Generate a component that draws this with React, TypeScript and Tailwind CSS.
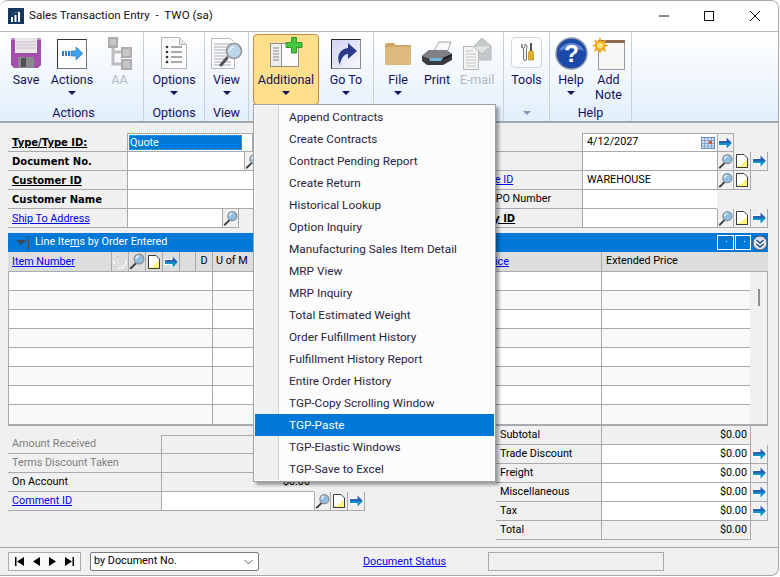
import type { ReactNode } from 'react';

const line = 'border-[#a9a9b0]';

function Lens() {
  return (
    <svg width="16" height="17" viewBox="0 0 16 17">
      <path d="M6.5 10.5L2 15" stroke="#3a3a3a" strokeWidth="2.2" strokeLinecap="round" />
      <path d="M5.5 10L1.5 14" stroke="#d8d8d8" strokeWidth="0.7" />
      <circle cx="10" cy="6" r="4.8" fill="#8fbfe0" stroke="#8a8f96" strokeWidth="1.4" />
      <path d="M7 6a3 3 0 0 1 3-3" stroke="#eaf5fc" strokeWidth="1.4" fill="none" />
    </svg>
  );
}

function Note() {
  return (
    <svg width="14" height="16" viewBox="0 0 14 16">
      <path d="M1.5 1.5h7.5l3.5 3.5v9.5h-11z" fill="#fff" stroke="#3c3c3c" />
      <path d="M2 14v-1h3l3-3 2-2 2-1v7z" fill="#fdf27a" />
      <path d="M1.5 14.5h11V5" stroke="#3c3c3c" fill="none" />
    </svg>
  );
}

function Arrow() {
  return (
    <svg width="15" height="14" viewBox="0 0 15 14">
      <path d="M0 4h7V.5L15 7l-8 6.500V10H0z" fill="#fff" opacity="0.85" />
      <path d="M1 5h7.500V1.500L14 7H1z" fill="#2a5fb8" />
      <path d="M1 7h13l-5.500 5.500V9H1z" fill="#1190c4" />
    </svg>
  );
}

function IconCell({ children, className = '' }: { children?: ReactNode; className?: string }) {
  return (
    <div className={`w-[17px] h-[19px] border-r border-b ${line} flex items-center justify-center shrink-0 ${className}`}>
      {children}
    </div>
  );
}

function Caret({ color = '#14105c', w = 8, h = 4 }: { color?: string; w?: number; h?: number }) {
  return (
    <svg width={w} height={h} viewBox="0 0 8 4" className="block">
      <path d="M0 0h8L4 4z" fill={color} />
    </svg>
  );
}

function SaveIcon() {
  return (
    <svg width="32" height="33" viewBox="0 0 32 33">
      <path d="M1 1h30v27l-3 3H4l-3-3z" fill="#a44fae" />
      <path d="M1 1h30v2H1z" fill="#c98fd0" />
      <rect x="5" y="1" width="22" height="15" fill="#e9e6ea" />
      <path d="M6 5h20M6 8h20M6 11h20" stroke="#c9c4cc" />
      <rect x="8" y="20" width="16" height="11" fill="#8a8a8e" />
      <rect x="11" y="21" width="5" height="9" fill="#4f4f55" />
    </svg>
  );
}

function ActionsIcon() {
  return (
    <svg width="32" height="33" viewBox="0 0 32 33">
      <rect x="1.5" y="2.5" width="29" height="29" fill="#fdfdfd" stroke="#777" />
      <path d="M1.5 31.5v-29h29" fill="none" stroke="#333" />
      <path d="M6 14h2v5H6zM9 14h2v5H9zM12 14h2v5h-2z" fill="#2c7fd0" />
      <path d="M15 14h5v-4l7 6.500-7 6.500v-4h-5z" fill="#3fa3e8" stroke="#2276c8" strokeWidth="0.6" />
    </svg>
  );
}

function TreeIcon() {
  return (
    <svg width="26" height="33" viewBox="0 0 26 33">
      <path d="M6 10v17h10M6 15h10" stroke="#bdbdbd" strokeWidth="3" fill="none" />
      <rect x="1" y="0" width="10" height="11" fill="#adadad" />
      <rect x="14" y="10" width="11" height="11" fill="#adadad" />
      <rect x="14" y="22" width="11" height="11" fill="#adadad" />
      <rect x="3" y="2" width="6" height="6" fill="#c6c6c6" />
      <rect x="16" y="12" width="7" height="7" fill="#c6c6c6" />
      <rect x="16" y="24" width="7" height="7" fill="#c6c6c6" />
    </svg>
  );
}

function OptionsIcon() {
  return (
    <svg width="26" height="33" viewBox="0 0 26 33">
      <path d="M.5.5h18l7 7v24H.5z" fill="#fcfcfc" stroke="#b5b5b5" />
      <path d="M18.500.5v7h7" fill="#e2e2e2" stroke="#b5b5b5" />
      <circle cx="6" cy="10" r="1.300" fill="#333" />
      <circle cx="6" cy="15" r="1.300" fill="#333" />
      <circle cx="6" cy="20" r="1.300" fill="#333" />
      <circle cx="6" cy="25" r="1.300" fill="#333" />
      <path d="M10 10h11M10 15h11M10 20h11M10 25h11" stroke="#555" />
    </svg>
  );
}

function ViewIcon() {
  return (
    <svg width="32" height="33" viewBox="0 0 32 33">
      <path d="M.5 1.500h19l4 4v26H.5z" fill="#fdfdfd" stroke="#bcbcbc" />
      <path d="M3 7h17M3 10h14M3 13h12M3 16h12M3 19h14M3 22h12M3 25h17M3 28h17" stroke="#a5abb6" />
      <path d="M16 21l-6 7" stroke="#555" strokeWidth="3" strokeLinecap="round" />
      <circle cx="23" cy="14" r="7.500" fill="#b9d5ea" stroke="#8e9399" strokeWidth="1.600" />
      <path d="M19 14a4 4 0 0 1 4-4" stroke="#f0f8fd" strokeWidth="1.600" fill="none" />
    </svg>
  );
}

function AdditionalIcon() {
  return (
    <svg width="34" height="33" viewBox="0 0 34 33">
      <rect x="1.500" y="6.500" width="28" height="23" fill="#fbfbfb" stroke="#8f8f8f" />
      <rect x="1.500" y="6.500" width="11" height="23" fill="#eeeeee" stroke="#8f8f8f" />
      <path d="M4 11h6M4 14h6M4 17h6M4 20h6M4 23h6" stroke="#8a8a8a" />
      <path d="M22.500.5h5v5h5.500v5h-5.500v5.500h-5V10.500H17v-5h5.500z" fill="#45c63f" stroke="#2f9a2c" />
    </svg>
  );
}

function GoToIcon() {
  return (
    <svg width="32" height="33" viewBox="0 0 32 33">
      <defs>
        <linearGradient id="gotoBg" x1="0" y1="0" x2="1" y2="1">
          <stop offset="0" stopColor="#cfd3f0" />
          <stop offset="1" stopColor="#f8f8fc" />
        </linearGradient>
      </defs>
      <rect x="1.500" y="2.500" width="29" height="29" fill="url(#gotoBg)" stroke="#8a8a8a" />
      <path d="M1.500 31.500v-29h29" fill="none" stroke="#2a2a2a" />
      <path d="M10 28c-4-8-1-16 8-17V6l9 8-9 8v-5c-4 0-7 4-8 11z" fill="#2c3a8c" />
    </svg>
  );
}

function FolderIcon() {
  return (
    <svg width="28" height="24" viewBox="0 0 28 24">
      <path d="M1 3a2 2 0 0 1 2-2h7l2 2h14a1 1 0 0 1 1 1v2H1z" fill="#cfa868" />
      <rect x="1" y="5" width="26" height="18" rx="1" fill="#deb97e" />
    </svg>
  );
}

function PrinterIcon() {
  return (
    <svg width="32" height="26" viewBox="0 0 32 26">
      <path d="M13 10L18 1h12l-4 11z" fill="#f8f8f8" stroke="#a8a8a8" />
      <path d="M1 15l7-6h17l6 4v6l-9 5H6l-5-4z" fill="#3b3b3d" />
      <path d="M1 15l7-6h17l6 4-10 4H6z" fill="#808084" />
      <path d="M8 17h14l-2 3H9z" fill="#6fb3d8" />
      <path d="M22 17l9-4v2l-9 4z" fill="#1e1e20" />
    </svg>
  );
}

function EmailIcon() {
  return (
    <svg width="30" height="33" viewBox="0 0 30 33">
      <path d="M11 10L20 1l9 8v14H11z" fill="#c6c9c9" stroke="#b5b8b8" />
      <path d="M11 10l9 7 9-8" fill="#e2e4e4" stroke="#b5b8b8" />
      <path d="M1.500 9.500h10l5 5v18h-15z" fill="#f3f3f3" stroke="#b5b8b8" />
      <path d="M4 14h7M4 17h10M4 20h10M4 23h10M4 26h10M4 29h10" stroke="#c4c6c6" />
    </svg>
  );
}

function ToolsIcon() {
  return (
    <div className="w-[31px] h-[31px] border border-[#d4d8dc] rounded-[4px] bg-[#fcfdfe] flex items-center justify-center -mt-[3px]">
      <svg width="14" height="18" viewBox="0 0 14 18">
        <path d="M2 1v3l1.500 1L5 4V1c2 1 2.500 3 1.500 5v10a1.500 1.500 0 0 1-3 0V6C1.500 5 1 3 2 1z" fill="#f2f2f2" stroke="#555" strokeWidth="0.8" />
        <rect x="10" y="0" width="2" height="8" fill="#555" />
        <path d="M9 8h4l.5 3v6h-5v-6z" fill="#e8b020" stroke="#a87a10" strokeWidth="0.6" />
      </svg>
    </div>
  );
}

function HelpIcon() {
  return (
    <svg width="33" height="33" viewBox="0 0 33 33">
      <circle cx="16.500" cy="16.500" r="15.500" fill="#1d4aa8" stroke="#8d97a6" strokeWidth="1.500" />
      <path d="M4 14a13 11 0 0 1 25 0c-7-3-18-3-25 0z" fill="#5d86d4" />
      <text x="16.500" y="25" textAnchor="middle" fontSize="24" fontWeight="700" fill="#fff" fontFamily="'Liberation Sans', sans-serif">?</text>
    </svg>
  );
}

function AddNoteIcon() {
  return (
    <svg width="33" height="33" viewBox="0 0 33 33">
      <rect x="6.500" y="3.500" width="26" height="29" fill="#f6f6f4" stroke="#9a9a9a" />
      <rect x="6" y="3" width="27" height="3" fill="#8a6a50" />
      <path d="M8 0l1.800 4.500L14 2.500l-1.500 4.500 4.500 1.500-4.500 1.800L14 15l-4.200-2L8 17l-1.800-4L2 15l1.500-4.700L0 8.500 3.500 7 2 2.500l4.200 2z" fill="#f7a820" />
      <circle cx="8" cy="8.500" r="3" fill="#fde27a" />
    </svg>
  );
}

function RibbonBtn({ label, icon, width, caret, disabled, active, second }: {
  label: string; icon: ReactNode; width: number; caret?: boolean; disabled?: boolean; active?: boolean; second?: string;
}) {
  return (
    <div
      style={{ width }}
      className={`h-[71px] mt-[2px] flex flex-col items-center shrink-0 text-[12.5px] leading-[15px] rounded-[4px] ${
        active ? 'bg-[#fddf8c] border border-[#c98a3c] pt-[2px]' : 'pt-[3px]'
      } ${disabled ? 'text-[#b4b9bd]' : 'text-[#14105c]'}`}
    >
      <div className="h-[33px] flex items-center justify-center">{icon}</div>
      <div className="mt-[2px] whitespace-nowrap">{label}</div>
      {second && <div className="whitespace-nowrap">{second}</div>}
      {caret && <div className="mt-[4px]"><Caret /></div>}
    </div>
  );
}

function RibbonGroup({ width, label, pl = 0, children }: { width: number; label?: ReactNode; pl?: number; children: ReactNode }) {
  return (
    <div style={{ width, paddingLeft: pl }} className="h-full shrink-0 flex flex-col border-r border-[#c8d0d8]">
      <div className="flex h-[73px]">{children}</div>
      <div className="flex-1 flex items-center justify-center text-[12.5px] text-[#14105c] -mt-[1px]">{label}</div>
    </div>
  );
}

function Row({ label, className = '', children }: { label: ReactNode; className?: string; children: ReactNode }) {
  return (
    <div className="flex h-[19px]">
      <div className={`border-b ${line} flex items-center whitespace-nowrap overflow-hidden shrink-0 ${className}`}>{label}</div>
      {children}
    </div>
  );
}

function Field({ children, className = '' }: { children?: ReactNode; className?: string }) {
  return (
    <div className={`border-l border-b ${line} bg-white h-[19px] flex items-center overflow-hidden shrink-0 ${className}`}>{children}</div>
  );
}

const linkCls = 'text-[#0000ee] underline';
const boldCls = "font-bold text-black font-['DejaVu_Sans',sans-serif] text-[10px]";

const menuItems = [
  'Append Contracts', 'Create Contracts', 'Contract Pending Report', 'Create Return', 'Historical Lookup',
  'Option Inquiry', 'Manufacturing Sales Item Detail', 'MRP View', 'MRP Inquiry', 'Total Estimated Weight',
  'Order Fulfillment History', 'Fulfillment History Report', 'Entire Order History', 'TGP-Copy Scrolling Window',
  'TGP-Paste', 'TGP-Elastic Windows', 'TGP-Save to Excel',
];

const totals = [
  { label: 'Subtotal', white: false, arrow: false },
  { label: 'Trade Discount', white: true, arrow: true },
  { label: 'Freight', white: true, arrow: true },
  { label: 'Miscellaneous', white: true, arrow: true },
  { label: 'Tax', white: true, arrow: true },
  { label: 'Total', white: false, arrow: false },
];

export default function App() {
  return (
    <div className="w-[780px] h-[577px] bg-white overflow-hidden">
      <div className="relative w-[779px] h-[576px] flex flex-col bg-[#f0f0f0] border-t border-r border-b border-[#a8a8a8] rounded-t-[8px] rounded-br-[8px] overflow-hidden text-[10.8px] text-black font-['Roboto',sans-serif]">
        {/* title bar */}
        <div className="h-[31px] bg-white flex items-center border-b border-[#b8b8b8] shrink-0">
          <svg width="16" height="16" viewBox="0 0 16 16" className="ml-[8px]">
            <rect width="16" height="16" fill="#14375e" />
            <path d="M3 9h2v5H3zM6.500 7h2v7h-2zM10 4h2v10h-2zM3 7l6-3 3-2" fill="#fff" />
          </svg>
          <span className="ml-[5px] text-[11.6px] text-[#111]">Sales Transaction Entry&nbsp; -&nbsp; TWO (sa)</span>
          <div className="ml-auto flex items-center">
            <svg width="12" height="12" viewBox="0 0 12 12" className="mr-[33px]"><path d="M1 6h10" stroke="#111" /></svg>
            <svg width="12" height="12" viewBox="0 0 12 12" className="mr-[34px]"><rect x="1.500" y="1.500" width="9" height="9" fill="none" stroke="#111" /></svg>
            <svg width="12" height="12" viewBox="0 0 12 12" className="mr-[17px]"><path d="M1 1l10 10M11 1L1 11" stroke="#111" /></svg>
          </div>
        </div>

        {/* ribbon */}
        <div className="h-[91px] flex shrink-0 bg-gradient-to-b from-white to-[#e2effb] border-b-2 border-[#a5a9ad]">
          <RibbonGroup width={144} label="Actions" pl={4}>
            <RibbonBtn width={44} label="Save" icon={<SaveIcon />} />
            <RibbonBtn width={48} label="Actions" icon={<ActionsIcon />} caret />
            <RibbonBtn width={47} label="AA" icon={<TreeIcon />} disabled />
          </RibbonGroup>
          <RibbonGroup width={61} label="Options">
            <RibbonBtn width={60} label="Options" icon={<OptionsIcon />} caret />
          </RibbonGroup>
          <RibbonGroup width={44} label="View">
            <RibbonBtn width={43} label="View" icon={<ViewIcon />} caret />
          </RibbonGroup>
          <RibbonGroup width={125} pl={4}>
            <RibbonBtn width={66} label="Additional" icon={<AdditionalIcon />} caret active />
            <RibbonBtn width={54} label="Go To" icon={<GoToIcon />} caret />
          </RibbonGroup>
          <RibbonGroup width={130} pl={4}>
            <RibbonBtn width={40} label="File" icon={<FolderIcon />} caret />
            <RibbonBtn width={38} label="Print" icon={<PrinterIcon />} />
            <RibbonBtn width={42} label="E-mail" icon={<EmailIcon />} disabled />
          </RibbonGroup>
          <RibbonGroup width={46} label={<Caret color="#7f96b8" />}>
            <RibbonBtn width={45} label="Tools" icon={<ToolsIcon />} />
          </RibbonGroup>
          <RibbonGroup width={82} label="Help">
            <RibbonBtn width={42} label="Help" icon={<HelpIcon />} caret />
            <RibbonBtn width={33} label="Add" second="Note" icon={<AddNoteIcon />} />
          </RibbonGroup>
        </div>

        {/* form */}
        <div className="flex-1 pl-[8px] pr-[10px] pt-[10px]">
          <div className="flex justify-between">
            <div className="w-[245px]">
              <Row label={<span className={boldCls + ' underline'}>Type/Type ID:</span>} className="w-[119px] pl-[4px] pt-[1px]">
                <div className={`flex-1 h-[19px] bg-white border ${line} flex items-center pl-[1px] overflow-hidden`}>
                  <div className="w-[113px] h-[15px] bg-[#0078d7] text-white outline-dotted outline-1 outline-[#f08030] -outline-offset-1 pl-[1px] leading-[15px]">Quote</div>
                </div>
              </Row>
              <Row label={<span className={boldCls}>Document No.</span>} className="w-[119px] pl-[4px]">
                <Field className="w-[117px]" />
                <IconCell className="border-l"><Lens /></IconCell>
              </Row>
              <Row label={<span className={boldCls + ' underline'}>Customer ID</span>} className="w-[119px] pl-[4px] pt-[1px]">
                <Field className="flex-1" />
              </Row>
              <Row label={<span className={boldCls}>Customer Name</span>} className="w-[119px] pl-[4px]">
                <Field className="flex-1" />
              </Row>
              <Row label={<span className={linkCls}>Ship To Address</span>} className="w-[119px] pl-[4px] pt-[2px]">
                <Field className="w-[95px]" />
                <IconCell className="border-l"><Lens /></IconCell>
              </Row>
            </div>

            <div className="w-[329px]">
              <Row label={<span className={boldCls + ' underline'}>Date</span>} className="w-[143px] pl-[4px]">
                <Field className="w-[135px] border-t justify-between pl-[4px] pr-[2px]">
                  <span>4/12/2027</span>
                  <svg width="14" height="12" viewBox="0 0 14 12">
                    <rect x=".5" y=".5" width="13" height="11" fill="#cfe0f2" stroke="#6f8fc0" />
                    <path d="M.5 3.500h13M.5 6.500h13M.5 9h13M3.500 .5v11M7 .5v11M10.500 .5v11" stroke="#6f8fc0" strokeWidth="0.7" />
                    <rect x="8" y="4" width="3" height="3" fill="#e05030" />
                  </svg>
                </Field>
                <IconCell className="border-l border-t"><Arrow /></IconCell>
              </Row>
              <Row label={<span className={boldCls + ' underline'}>Batch ID</span>} className="w-[143px] pl-[4px]">
                <Field className="w-[135px]" />
                <IconCell className="border-l"><Lens /></IconCell>
                <IconCell><Note /></IconCell>
                <IconCell><Arrow /></IconCell>
              </Row>
              <Row label={<span className={linkCls}>Default Site ID</span>} className="w-[143px] pl-[6px] pt-[1px]">
                <Field className="w-[135px] pl-[4px]">WAREHOUSE</Field>
                <IconCell className="border-l"><Lens /></IconCell>
                <IconCell><Note /></IconCell>
              </Row>
              <Row label={<span>Customer PO Number</span>} className="w-[143px] pl-[7px]">
                <Field className="w-[135px]" />
              </Row>
              <Row label={<span className={boldCls + ' underline'}>Currency ID</span>} className="w-[143px] pl-[10px] pt-[1px]">
                <Field className="w-[135px]" />
                <IconCell className="border-l"><Lens /></IconCell>
                <IconCell><Note /></IconCell>
                <IconCell><Arrow /></IconCell>
              </Row>
            </div>
          </div>

          {/* line items */}
          <div className="mt-[5px]">
            <div className="h-[19px] bg-[#0078d7] flex items-center text-white">
              <div className="w-[18px] h-full flex items-center justify-end"><Caret color="#3d4a55" w={10} h={5} /></div>
              <div className="ml-[2px] w-px h-[14px] bg-[#3d4a55]" />
              <span className="ml-[6px]">Line Ite<span className="underline">m</span>s by Order Entered</span>
              <div className="ml-auto flex items-center">
                <div className="relative w-[17px] h-[15px] border border-white mr-px">
                  <div className="absolute left-[8px] top-[5px] w-px h-px bg-white" />
                </div>
                <div className="relative w-[16px] h-[15px] border border-white mr-px">
                  <div className="absolute left-[8px] top-[5px] w-px h-px bg-white" />
                </div>
                <svg width="16" height="16" viewBox="0 0 16 16">
                  <circle cx="8" cy="8" r="7" fill="#dde3e8" stroke="#556" />
                  <path d="M4.500 5l3.500 3 3.500-3M4.500 9l3.500 3 3.500-3" stroke="#2a5a90" strokeWidth="1.500" fill="none" />
                </svg>
              </div>
            </div>
            <div className={`h-[20px] flex bg-[#dcdedd] border-b ${line}`}>
              <div className="w-[103px] pl-[4px] pt-[1px] flex items-center"><span className={linkCls}>Item Number</span></div>
              <div className={`w-[17px] border-l ${line} flex items-center justify-center`}>
                <svg width="14" height="14" viewBox="0 0 14 14"><path d="M1 9V5l4-4h4M13 5v4l-4 4H5" fill="none" stroke="#f4f4f4" strokeWidth="1.500" /><path d="M1 5l4-4h4" fill="none" stroke="#b8b8b8" /></svg>
              </div>
              <div className={`w-[17px] border-l ${line} flex items-center justify-center`}><Lens /></div>
              <div className={`w-[17px] border-l ${line} flex items-center justify-center`}><Note /></div>
              <div className={`w-[17px] border-l ${line} flex items-center justify-center`}><Arrow /></div>
              <div className={`w-[16px] border-l ${line}`} />
              <div className={`w-[17px] border-l ${line} flex items-center justify-center`}>D</div>
              <div className={`w-[41px] border-l ${line} pl-[3px] flex items-center whitespace-nowrap`}>U of M</div>
              <div className="w-[348px] pt-[1px] flex items-center justify-end pr-[92px]"><span className={linkCls}>Unit Price</span></div>
              <div className={`flex-1 border-l ${line} pl-[4px] flex items-center`}>Extended Price</div>
            </div>
            <div className={`flex border-l border-r border-b-2 ${line}`}>
              <div className="flex-1">
                {[0, 1, 2, 3, 4, 5, 6, 7].map((i) => (
                  <div key={i} className={`h-[19px] flex border-b ${line} last:border-b-0 ${i % 2 ? 'bg-[#f7f8f8]' : 'bg-white'}`}>
                    <div className={`w-[204px] border-r ${line}`} />
                    <div className={`w-[389px] border-r ${line}`} />
                  </div>
                ))}
              </div>
              <div className="w-[17px] bg-[#f0f0f0] flex justify-center pt-[17px]">
                <div className="w-[2px] h-[17px] bg-[#8e8e8e]" />
              </div>
            </div>
          </div>

          {/* bottom blocks */}
          <div className="flex justify-between">
            <div className="w-[357px] mt-[9px]">
              <div className="flex h-[19px]">
                <div className={`w-[153px] border-b ${line} pl-[4px] flex items-center text-[#808080]`}>Amount Received</div>
                <div className={`w-[153px] border-l border-t border-b ${line}`} />
              </div>
              <div className="flex h-[19px]">
                <div className={`w-[153px] border-b ${line} pl-[4px] flex items-center text-[#808080]`}>Terms Discount Taken</div>
                <div className={`w-[153px] border-l border-b ${line}`} />
              </div>
              <div className="flex h-[19px]">
                <div className={`w-[153px] border-b ${line} pl-[4px] flex items-center`}>On Account</div>
                <div className={`w-[153px] border-l border-b ${line} flex items-center justify-end pr-[4px]`}>$0.00</div>
              </div>
              <div className="flex h-[19px]">
                <div className={`w-[153px] border-b ${line} pl-[4px] pt-[1px] flex items-center`}><span className={linkCls}>Comment ID</span></div>
                <Field className="w-[153px]" />
                <IconCell className="border-l"><Lens /></IconCell>
                <IconCell><Note /></IconCell>
                <IconCell><Arrow /></IconCell>
              </div>
            </div>
            <div className="w-[272px]">
              {totals.map((t) => (
                <div key={t.label} className="flex h-[19px]">
                  <div className={`w-[105px] border-b ${line} pl-[4px] pt-[1px] flex items-center`}>{t.label}</div>
                  <div className={`w-[150px] border-l border-r border-b ${line} flex items-center justify-end pr-[3px] ${t.white ? 'bg-white' : ''}`}>$0.00</div>
                  {t.arrow && <IconCell><Arrow /></IconCell>}
                </div>
              ))}
            </div>
          </div>
        </div>

        {/* status bar */}
        <div className="h-[28px] shrink-0 border-t border-[#a8a8a8] flex items-center pl-[8px]">
          <div className="w-[73px] h-[19px] bg-[#f8f8f8] border border-[#a9a9b0] flex items-center justify-between px-[6px]">
            <svg width="9" height="9" viewBox="0 0 9 9"><path d="M0 0h1.500v9H0zM9 0v9L2 4.500z" /></svg>
            <svg width="7" height="9" viewBox="0 0 7 9"><path d="M7 0v9L0 4.500z" /></svg>
            <svg width="7" height="9" viewBox="0 0 7 9"><path d="M0 0v9l7-4.500z" /></svg>
            <svg width="9" height="9" viewBox="0 0 9 9"><path d="M0 0v9l7-4.500zM7.500 0H9v9H7.500z" /></svg>
          </div>
          <div className="ml-[9px] w-[169px] h-[19px] bg-white border border-[#7a7a7a] rounded-[2px] flex items-center pl-[3px] justify-between pr-[5px]">
            <span>by Document No.</span>
            <svg width="9" height="6" viewBox="0 0 9 6"><path d="M.5 1l4 4 4-4" fill="none" stroke="#666" /></svg>
          </div>
          <span className={`ml-[104px] pt-[1px] w-[82px] shrink-0 whitespace-nowrap ${linkCls}`}>Document Status</span>
          <div className="ml-[43px] w-[176px] h-[19px] border border-[#a9a9b0]" />
        </div>

        {/* additional menu, drops over the form */}
        <div className="absolute left-[253px] top-[103px] w-[243px] h-[378px] bg-[#fcfcfc] border border-[#a0a0a0] shadow-[3px_3px_3px_rgba(0,0,0,0.35)] p-px flex flex-col text-[11.8px] text-[#2a2440]">
          <div className="absolute left-[1px] top-[1px] bottom-[1px] w-[24px] bg-[#f0f0f0] border-r border-[#d0d0d0]" />
          {menuItems.map((item) => (
            <div key={item} className={`relative h-[22px] shrink-0 flex items-center pl-[34px] pt-[1px] ${item === 'TGP-Paste' ? 'bg-[#0078d7] text-white' : ''}`}>
              {item}
            </div>
          ))}
        </div>
      </div>
    </div>
  );
}
